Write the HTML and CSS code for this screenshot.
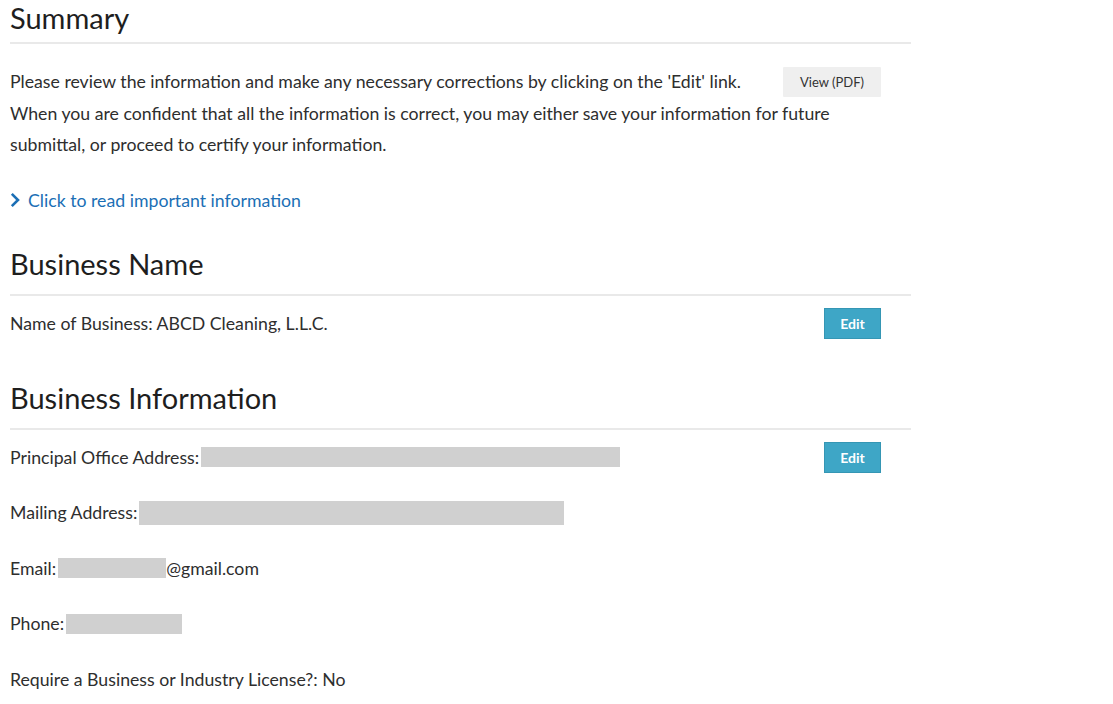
FILE: index.html
```html
<!DOCTYPE html>
<html lang="en">
<head>
<meta charset="utf-8">
<title>Summary</title>
<link rel="stylesheet" href="styles.css">
</head>
<body>
<main class="page">
  <section class="section summary">
    <h1 class="heading heading-main">Summary</h1>
    <div class="intro">
      <button class="btn btn-light" type="button">View (PDF)</button>
      <p class="intro-text">Please review the information and make any necessary corrections by clicking on the 'Edit' link.<br>When you are confident that all the information is correct, you may either save your information for future submittal, or proceed to certify your information.</p>
    </div>
    <a class="info-link" href="#"><svg class="chev" width="10" height="16" viewBox="0 0 10 16"><path d="M1.8 1.8 L8 8 L1.8 14.2" fill="none" stroke="#1b6fb5" stroke-width="2.6"/></svg>Click to read important information</a>
  </section>

  <section class="section">
    <h2 class="heading">Business Name</h2>
    <div class="row">
      <div class="field">Name of Business: ABCD Cleaning, L.L.C.</div>
      <button class="btn btn-edit" type="button">Edit</button>
    </div>
  </section>

  <section class="section">
    <h2 class="heading">Business Information</h2>
    <div class="row">
      <div class="field">Principal Office Address:<span class="redact r-office"></span></div>
      <button class="btn btn-edit" type="button">Edit</button>
    </div>
    <div class="row">
      <div class="field">Mailing Address:<span class="redact r-mail"></span></div>
    </div>
    <div class="row">
      <div class="field">Email:<span class="redact r-email"></span>@gmail.com</div>
    </div>
    <div class="row">
      <div class="field">Phone:<span class="redact r-phone"></span></div>
    </div>
    <div class="row">
      <div class="field">Require a Business or Industry License?: No</div>
    </div>
  </section>
</main>
</body>
</html>
```

FILE: styles.css
```css
* { box-sizing: border-box; }
html, body { margin: 0; padding: 0; background: #fff; }
body {
  font-family: Lato, "Liberation Sans", sans-serif;
  color: #2e2e2e;
  font-size: 17.7px;
}
.page {
  width: 911px;
  padding-left: 10px;
}
.heading {
  margin: 0;
  font-weight: 400;
  font-size: 29px;
  line-height: 36px;
  color: #1e1e1e;
  border-bottom: 2px solid #e9e9e9;
  padding-bottom: 12px;
}
.heading-main { padding-bottom: 6px; }
.intro {
  margin-top: 22px;
  padding-right: 30px;
}
.intro-text {
  margin: 0;
  line-height: 31.5px;
}
.btn {
  border: 0;
  font-family: inherit;
  cursor: pointer;
  flex: none;
}
.btn-light {
  float: right;
  margin-top: 1px;
  width: 98px;
  height: 30px;
  background: #efefef;
  color: #333;
  font-size: 13px;
  border-radius: 1px;
}
.info-link {
  display: inline-flex;
  align-items: center;
  gap: 8px;
  margin-top: 29px;
  color: #1b6fb5;
  text-decoration: none;
}
.chev { display: block; }
.summary { padding-bottom: 6px; }
.section + .section { margin-top: 28px; }
.row {
  display: flex;
  justify-content: space-between;
  align-items: center;
  height: 55.5px;
  padding-right: 30px;
}
.field { display: flex; align-items: center; }
.btn-edit {
  width: 57px;
  height: 31px;
  background: #3ea6c6;
  color: #fff;
  font-size: 14px;
  font-weight: 700;
  border: 1px solid #3596b4;
}
.redact {
  display: inline-block;
  background: #d0d0d0;
  height: 20px;
  margin-left: 2px;
}
.r-office { width: 419px; }
.r-mail { width: 425px; height: 24px; }
.r-email { width: 108px; }
.r-phone { width: 116px; }
```
